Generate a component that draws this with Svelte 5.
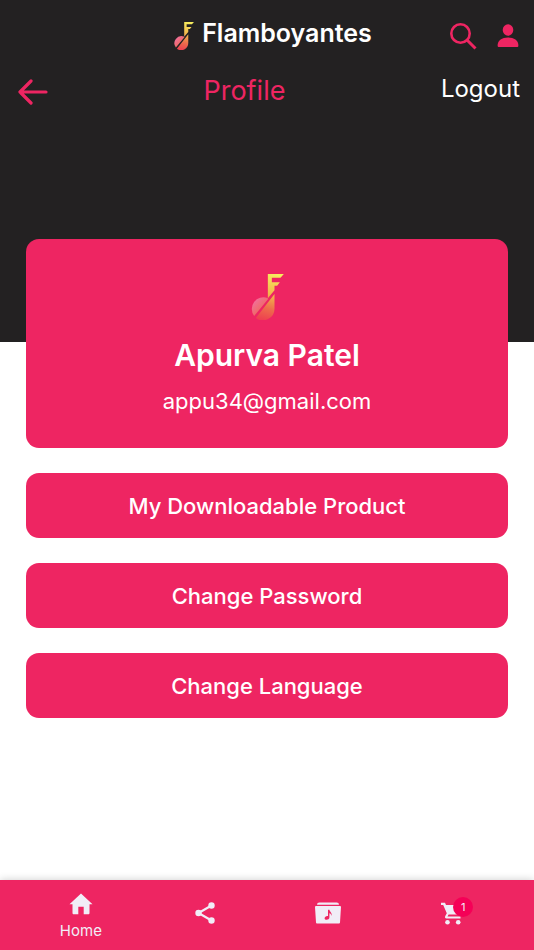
<script lang="ts">
    interface Action {
        label: string;
    }

    let { cartCount = 1 }: { cartCount?: number } = $props();

    const user = {
        name: 'Apurva Patel',
        email: 'appu34@gmail.com'
    };

    const actions: Action[] = [
        { label: 'My Downloadable Product' },
        { label: 'Change Password' },
        { label: 'Change Language' }
    ];
</script>

{#snippet logo(id: string)}
    <svg class="logo" viewBox="0 0 98 138" aria-hidden="true">
        <defs>
            <linearGradient id="{id}-note" gradientUnits="userSpaceOnUse" x1="75" y1="0" x2="38" y2="138">
                <stop offset="0" stop-color="#f6ee5e" />
                <stop offset="0.45" stop-color="#f3b44c" />
                <stop offset="0.75" stop-color="#ee6b4c" />
                <stop offset="1" stop-color="#ee4050" />
            </linearGradient>
            <linearGradient id="{id}-disc" gradientUnits="userSpaceOnUse" x1="8" y1="80" x2="34" y2="106">
                <stop offset="0" stop-color="#f26f9c" />
                <stop offset="1" stop-color="#ee6a62" />
            </linearGradient>
        </defs>
        <path fill="url(#{id}-note)" d="M50 0H98L88 11H62V25H86L78 35H70V49L50 73Z" />
        <path fill="url(#{id}-note)" d="M70 60V104A35 35 0 0 1 14 132Z" />
        <path fill="url(#{id}-disc)" d="M9 126A35 35 0 0 1 49 72L51 75Z" />
    </svg>
{/snippet}

<div class="page">
    <header>
        <div class="top-bar">
            <div class="brand">
                {@render logo('brand')}
                <span>Flamboyantes</span>
            </div>
            <div class="tools">
                <button type="button" aria-label="Search">
                    <svg width="28" height="28" viewBox="0 0 28 28" fill="none" stroke="currentColor" stroke-width="2.6">
                        <circle cx="11.5" cy="11.5" r="9.2" />
                        <path d="M18 18L26.5 26.5" stroke-width="3" />
                    </svg>
                </button>
                <button type="button" aria-label="Account">
                    <svg width="22" height="24" viewBox="0 0 22 24" fill="currentColor">
                        <ellipse cx="11" cy="6" rx="5.3" ry="5.8" />
                        <path d="M.6 21.5C.6 16.5 5 13.6 11 13.6s10.4 2.9 10.4 7.9c0 1-.6 1.5-1.5 1.5H2.1C1.200 23 .6 22.5 .6 21.5Z" />
                    </svg>
                </button>
            </div>
        </div>
        <div class="title-bar">
            <button type="button" class="back" aria-label="Back">
                <svg width="30" height="26" viewBox="0 0 30 26" fill="none" stroke="currentColor" stroke-width="3.2" stroke-linecap="round" stroke-linejoin="round">
                    <path d="M13 2L2 13L13 24M2 13H28" />
                </svg>
            </button>
            <h1>Profile</h1>
            <button type="button" class="logout">Logout</button>
        </div>
    </header>

    <main>
        <section class="card">
            {@render logo('card')}
            <h2>{user.name}</h2>
            <p>{user.email}</p>
        </section>
        {#each actions as action}
            <button type="button" class="action">{action.label}</button>
        {/each}
    </main>

    <nav>
        <a href="#home" class="active">
            <svg width="24" height="22" viewBox="0 0 24 22" fill="currentColor" aria-hidden="true">
                <path d="M12 .5L.5 11.3H3.5V20C3.5 20.8 4 21.3 4.8 21.3H9.3V13.8H14.7V21.3H19.2C20 21.3 20.5 20.8 20.5 20V11.3H23.5Z" />
            </svg>
            <span>Home</span>
        </a>
        <a href="#share" aria-label="Share">
            <svg width="20" height="22" viewBox="0 0 20 22" fill="currentColor">
                <path d="M16.5 3.5L3.5 11L16.5 18.5" fill="none" stroke="currentColor" stroke-width="2.2" />
                <circle cx="16.5" cy="3.5" r="3.2" />
                <circle cx="3.5" cy="11" r="3.2" />
                <circle cx="16.5" cy="18.5" r="3.2" />
            </svg>
        </a>
        <a href="#music" aria-label="My music">
            <svg width="26" height="22" viewBox="0 0 26 22" fill="currentColor">
                <path d="M2 2.8Q2 .5 4.3 .5H21.7Q24 .5 24 2.8Z" />
                <path fill-rule="evenodd" d="M1 4H25Q26 4 26 5L25 20.5Q25 21.500 24 21.5H2Q1 21.5 1 20.5L0 5Q0 4 1 4ZM13 7.800V14C11.300 13.600 9.600 14.700 9.600 16.200C9.600 18.500 14.400 18.200 14.400 15.500V11.200C15.800 11.500 16.400 12.500 16 14C18 11.500 14.800 10 14.400 7.800Z" />
            </svg>
        </a>
        <a href="#cart" aria-label="Cart">
            <span class="cart">
                <svg width="22" height="23" viewBox="0 0 22 23" fill="currentColor">
                    <path d="M0 .8H4L5 3H20.5Q21.5 3 21 4L17.3 11.5Q16.7 12.5 15.5 12.5H7.600L6.500 14.500H19.500V16.600H5.500Q3.300 16.300 4.300 14L5.800 11.300L2.200 2.900H0Z" />
                    <circle cx="6.5" cy="20.3" r="2.3" />
                    <circle cx="17.2" cy="20.3" r="2.3" />
                </svg>
                <span class="badge">{cartCount}</span>
            </span>
        </a>
    </nav>
</div>

<style>
    :global(body) {
        margin: 0;
        background: #fff;
    }

    .page {
        display: flex;
        flex-direction: column;
        min-height: 100vh;
        color: #fff;
        font-family: Inter, "Liberation Sans", sans-serif;
    }

    svg {
        display: block;
        flex: none;
    }

    button {
        padding: 0;
        border: 0;
        background: none;
        color: inherit;
        font: inherit;
        cursor: pointer;
    }

    header {
        box-sizing: border-box;
        min-height: 342px;
        background: #232122;
    }

    .top-bar {
        display: grid;
        grid-template-columns: 1fr auto 1fr;
        align-items: center;
        height: 66px;
        padding: 0 15px;
    }

    .brand {
        grid-column: 2;
        display: flex;
        align-items: center;
        gap: 8px;
        padding-left: 12px;
        font-size: 25px;
        font-weight: 600;
        line-height: 32px;
    }

    .brand .logo {
        width: 20px;
        height: 28px;
        margin-top: 6px;
    }

    .tools {
        display: flex;
        justify-content: flex-end;
        align-items: center;
        gap: 20px;
        padding-top: 6px;
        color: #ee2562;
    }

    .title-bar {
        display: flex;
        align-items: center;
        justify-content: space-between;
        height: 50px;
        padding: 0 14px 0 18px;
    }

    .back {
        padding-top: 2px;
        color: #ee2562;
    }

    h1 {
        margin: 0;
        color: #ee2562;
        font-size: 27px;
        font-weight: 400;
        line-height: 36px;
    }

    .logout {
        padding-bottom: 4px;
        font-size: 24px;
        line-height: 32px;
    }

    main {
        display: flex;
        flex: 1;
        flex-direction: column;
        gap: 25px;
        margin: -103px 26px 26px;
    }

    .card {
        display: flex;
        flex-direction: column;
        align-items: center;
        padding: 35px 16px 31px;
        border-radius: 13px;
        background: #ee2562;
        text-align: center;
    }

    .card .logo {
        width: 33px;
        height: 46px;
    }

    h2 {
        margin: 15px 0 10px;
        font-size: 30px;
        font-weight: 600;
        line-height: 40px;
    }

    p {
        margin: 0;
        font-size: 22px;
        line-height: 32px;
    }

    .action {
        min-height: 65px;
        border-radius: 13px;
        background: #ee2562;
        font-size: 22px;
        font-weight: 500;
        line-height: 32px;
    }

    nav {
        position: sticky;
        bottom: 0;
        display: flex;
        height: 70px;
        padding: 0 20px 0 19px;
        background: #ee2562;
        box-shadow: 0 0 8px rgba(0, 0, 0, 0.2);
    }

    nav a {
        display: flex;
        flex: 1;
        flex-direction: column;
        align-items: center;
        justify-content: center;
        gap: 6px;
        padding-bottom: 4px;
        color: #f1edf7;
        font-size: 15px;
        line-height: 20px;
        text-decoration: none;
    }

    nav .active {
        padding: 4px 0 0;
    }

    .cart {
        position: relative;
    }

    .badge {
        position: absolute;
        top: -5px;
        left: 12px;
        width: 20px;
        height: 20px;
        border-radius: 50%;
        background: #f50057;
        font-size: 11px;
        text-align: center;
    }
</style>
